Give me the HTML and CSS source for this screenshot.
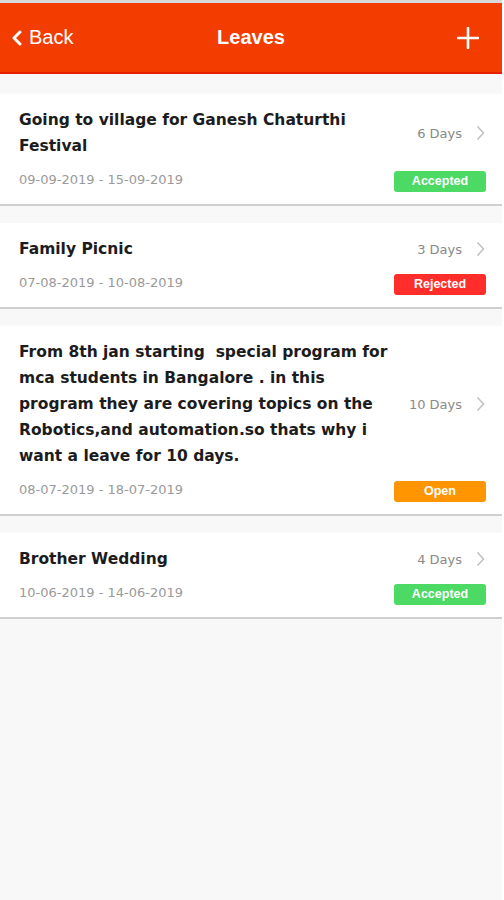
FILE: index.html
```html
<!DOCTYPE html>
<html lang="en">
<head>
    <meta charset="UTF-8">
    <meta name="viewport" content="width=device-width, initial-scale=1.0">
    <title>Leaves</title>
    <link rel="stylesheet" href="styles.css">
</head>
<body>

<div class="screen">
    <div class="top-bar">
        <a class="back-link" href="#">
            <svg width="12" height="16" viewBox="0 0 12 16">
                <path d="M9 2 L3 8 L9 14" fill="none" stroke="#fff" stroke-width="3" stroke-linecap="round" stroke-linejoin="round"/>
            </svg>
            Back
        </a>
        <h1 class="title">Leaves</h1>
        <a class="add-btn" href="#">
            <svg width="22" height="22" viewBox="0 0 22 22">
                <path d="M11 1 V21 M1 11 H21" stroke="#fff" stroke-width="2.6" stroke-linecap="round"/>
            </svg>
        </a>
    </div>

    <div class="leave-list">
        <div class="leave-card">
            <div class="leave-reason">Going to village for Ganesh Chaturthi Festival</div>
            <div class="leave-days">6 Days
                <svg class="chevron" width="9" height="16" viewBox="0 0 9 16"><path d="M1.5 1.5 L7.5 8 L1.5 14.5" fill="none" stroke="#c2c2c2" stroke-width="1.6"/></svg>
            </div>
            <div class="leave-dates">09-09-2019 - 15-09-2019</div>
            <div class="status accepted">Accepted</div>
        </div>

        <div class="leave-card">
            <div class="leave-reason">Family Picnic</div>
            <div class="leave-days">3 Days
                <svg class="chevron" width="9" height="16" viewBox="0 0 9 16"><path d="M1.5 1.5 L7.5 8 L1.5 14.5" fill="none" stroke="#c2c2c2" stroke-width="1.6"/></svg>
            </div>
            <div class="leave-dates">07-08-2019 - 10-08-2019</div>
            <div class="status rejected">Rejected</div>
        </div>

        <div class="leave-card">
            <div class="leave-reason">From 8th jan starting&nbsp; special program for mca students in Bangalore . in this program they are covering topics on the Robotics,and automation.so thats why i want a leave for 10 days.</div>
            <div class="leave-days">10 Days
                <svg class="chevron" width="9" height="16" viewBox="0 0 9 16"><path d="M1.5 1.5 L7.5 8 L1.5 14.5" fill="none" stroke="#c2c2c2" stroke-width="1.6"/></svg>
            </div>
            <div class="leave-dates">08-07-2019 - 18-07-2019</div>
            <div class="status open">Open</div>
        </div>

        <div class="leave-card">
            <div class="leave-reason">Brother Wedding</div>
            <div class="leave-days">4 Days
                <svg class="chevron" width="9" height="16" viewBox="0 0 9 16"><path d="M1.5 1.5 L7.5 8 L1.5 14.5" fill="none" stroke="#c2c2c2" stroke-width="1.6"/></svg>
            </div>
            <div class="leave-dates">10-06-2019 - 14-06-2019</div>
            <div class="status accepted">Accepted</div>
        </div>
    </div>
</div>

</body>
</html>
```

FILE: styles.css
```css
body {
    margin: 0;
    font-family: "DejaVu Sans", Verdana, sans-serif;
    background-color: #fff;
}

.screen {
    width: 502px;
    height: 900px;
    background-color: #f8f8f8;
    border-top: 3px solid #d9d9d9;
    box-sizing: border-box;
}

/* header */
.top-bar {
    height: 71px;
    background-color: #f23c00;
    border-bottom: 2px solid #e52200;
    box-sizing: border-box;
    display: grid;
    grid-template-columns: 1fr auto 1fr;
    align-items: center;
    padding: 0 11px;
    color: #fff;
    font-family: "Liberation Sans", Arial, sans-serif;
}

.back-link {
    display: flex;
    align-items: center;
    gap: 6px;
    color: #fff;
    text-decoration: none;
    font-size: 20px;
}

.title {
    margin: 0;
    font-size: 20px;
    font-weight: bold;
}

.add-btn {
    justify-self: end;
    display: flex;
    margin-right: 12px;
}

/* list */
.leave-list {
    padding-top: 20px;
    display: flex;
    flex-direction: column;
    gap: 17px;
}

.leave-card {
    background-color: #fff;
    border-bottom: 2px solid #cfcfcf;
    padding: 13px 16px 14px 19px;
    display: grid;
    grid-template-columns: 372px 1fr;
    row-gap: 10px;
    align-items: center;
}

.leave-reason {
    font-size: 15.5px;
    font-weight: bold;
    line-height: 26px;
    color: #1c1c1c;
}

.leave-days {
    justify-self: end;
    display: flex;
    align-items: center;
    gap: 14px;
    font-size: 13px;
    color: #8a8a8a;
}

.chevron {
    margin-right: 1px;
}

.leave-dates {
    font-size: 13px;
    line-height: 20px;
    color: #9a9a9a;
}

.status {
    justify-self: end;
    margin: 2px 0 -2px;
    width: 92px;
    height: 21px;
    line-height: 21px;
    border-radius: 3px;
    text-align: center;
    color: #fff;
    font-family: "Liberation Sans", Arial, sans-serif;
    font-size: 12.5px;
    font-weight: bold;
}

.accepted {
    background-color: #4cd964;
}

.rejected {
    background-color: #ff2e2a;
}

.open {
    background-color: #ff9500;
}
```
